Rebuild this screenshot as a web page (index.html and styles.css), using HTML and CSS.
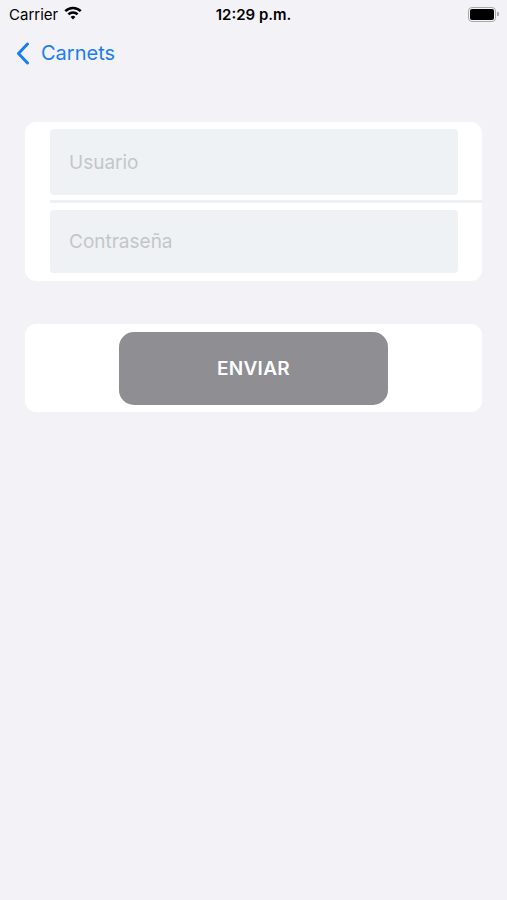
FILE: index.html
```html
<!DOCTYPE html>
<html lang="es">
<head>
<meta charset="UTF-8">
<meta name="viewport" content="width=device-width, initial-scale=1.0">
<title>Carnets - Login</title>
<link rel="stylesheet" href="styles.css">
</head>
<body>
<div class="status-bar">
    <div class="status-left">
        <span class="carrier">Carrier</span>
        <svg class="wifi" width="18" height="14" viewBox="0 0 18 14">
            <path d="M1.3 5.2 A10.9 10.9 0 0 1 16.7 5.2" fill="none" stroke="#000" stroke-width="2.6"/>
            <path d="M4.4 8.4 A6.5 6.5 0 0 1 13.6 8.4" fill="none" stroke="#000" stroke-width="2.6"/>
            <path d="M9 13.4 L6.6 11 A3.4 3.4 0 0 1 11.4 11 Z" fill="#000"/>
        </svg>
    </div>
    <span class="time">12:29 p.m.</span>
    <div class="battery">
        <div class="battery-body"><div class="battery-level"></div></div>
        <div class="battery-tip"></div>
    </div>
</div>

<div class="nav-bar">
    <a class="back" href="#">
        <svg width="14" height="23" viewBox="0 0 14 23">
            <path d="M11.5 2 L2.5 11.5 L11.5 21" fill="none" stroke="#1a7df2" stroke-width="3" stroke-linecap="round" stroke-linejoin="round"/>
        </svg>
        <span>Carnets</span>
    </a>
</div>

<div class="content">
    <form class="card form-card">
        <div class="field-row">
            <input class="field user" type="text" placeholder="Usuario">
        </div>
        <div class="separator"></div>
        <div class="field-row">
            <input class="field pass" type="password" placeholder="Contraseña">
        </div>
    </form>

    <div class="card button-card">
        <button class="send" type="button">ENVIAR</button>
    </div>
</div>
</body>
</html>
```

FILE: styles.css
```css
body {
    margin: 0;
    padding: 0;
    background-color: #f2f2f7;
    font-family: "Inter", "Liberation Sans", Arial, sans-serif;
    color: #000;
}

.status-bar {
    height: 28px;
    display: flex;
    align-items: center;
    justify-content: space-between;
    padding: 0 8px 0 9px;
    position: relative;
}

.status-left {
    display: flex;
    align-items: center;
    gap: 6px;
}

.carrier {
    font-size: 15px;
}

.wifi {
    margin-top: -3px;
}

.time {
    position: absolute;
    left: 0;
    right: 0;
    text-align: center;
    font-size: 15px;
    font-weight: 600;
}

.battery {
    display: flex;
    align-items: center;
}

.battery-body {
    width: 24px;
    height: 11px;
    border: 1px solid #a8a8ad;
    border-radius: 4px;
    padding: 1px;
    box-sizing: content-box;
}

.battery-level {
    width: 100%;
    height: 100%;
    background-color: #000;
    border-radius: 2px;
}

.battery-tip {
    width: 2px;
    height: 4px;
    margin-left: 1px;
    background-color: #a8a8ad;
    border-radius: 0 1px 1px 0;
}

.nav-bar {
    height: 50px;
    display: flex;
    align-items: center;
    padding-left: 16px;
}

.back {
    display: flex;
    align-items: center;
    gap: 11px;
    color: #1a7df2;
    text-decoration: none;
    font-size: 20px;
}

.back span {
    margin-top: -1px;
}

.content {
    padding: 44px 25px 0 25px;
}

.card {
    background-color: #fff;
    border-radius: 11px;
}

.form-card {
    padding: 7px 0 8px 0;
}

.field-row {
    padding: 0 24px 0 25px;
}

.field {
    display: block;
    width: 100%;
    box-sizing: border-box;
    border: none;
    border-radius: 4px;
    background-color: #eff2f4;
    padding: 0 19px;
    font-family: inherit;
    font-size: 19px;
    outline: none;
}

.field.user {
    height: 66px;
}

.field.pass {
    height: 63px;
}

.field::placeholder {
    color: #c3c6c9;
}

.separator {
    height: 3px;
    margin: 5px 0 7px 25px;
    background-color: #eef0f2;
}

.button-card {
    margin-top: 43px;
    padding: 8px 0 7px 0;
    display: flex;
    justify-content: center;
}

.send {
    width: 269px;
    height: 73px;
    border: none;
    border-radius: 15px;
    background-color: #8e8e93;
    color: #fff;
    font-family: inherit;
    font-size: 19px;
    font-weight: 600;
    letter-spacing: 0.3px;
    cursor: pointer;
}
```
